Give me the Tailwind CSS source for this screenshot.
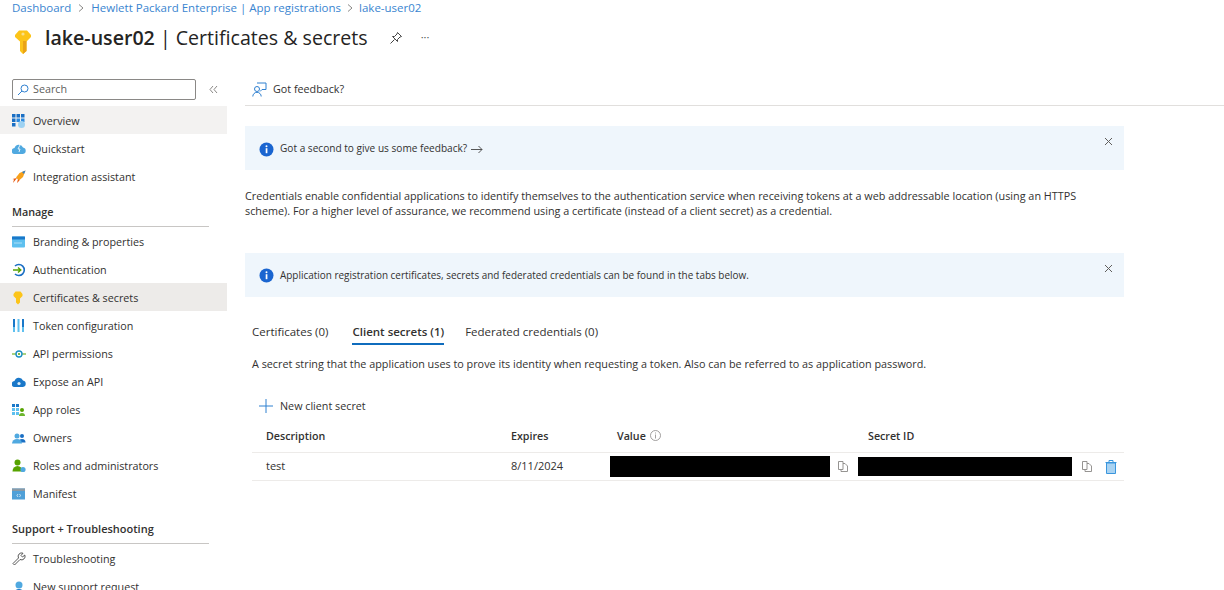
<!DOCTYPE html>
<html lang="en">
<head>
<meta charset="UTF-8" />
<title>lake-user02 | Certificates &amp; secrets</title>
<script src="https://cdn.jsdelivr.net/npm/@tailwindcss/browser@4"></script>
</head>
<body class="bg-white h-[590px] w-[1224px] overflow-hidden font-['Open_Sans','Noto_Sans',sans-serif] text-[11px] text-[#323130]">

<!-- Header -->
<div class="h-[69px] pl-3">
  <div class="flex items-center h-[16px] text-[11.5px] text-[#3a85d0]">
    <span>Dashboard</span>
    <svg class="w-[8px] h-[8px] mx-[6px]" viewBox="0 0 8 8" fill="none" stroke="#8a8886"><path d="M2 0.5 L6 4 L2 7.5"/></svg>
    <span>Hewlett Packard Enterprise | App registrations</span>
    <svg class="w-[8px] h-[8px] mx-[5px]" viewBox="0 0 8 8" fill="none" stroke="#8a8886"><path d="M2 0.5 L6 4 L2 7.5"/></svg>
    <span>lake-user02</span>
  </div>
  <div class="flex items-center mt-[9px] h-[26px]">
    <svg class="w-[18px] h-[26px] mt-[7px] ml-[2px]" viewBox="0 0 18 26"><path d="M5 1.5 H13 L17 6 V8 L12.5 12.5 V22 L9 25 L6 22 V12.5 L1 8 V6 Z" fill="#fcc419"/><path d="M9 12 H12.5 V22 L9 25 Z" fill="#eaa316"/><circle cx="9" cy="5" r="1.6" fill="#f8e08a"/></svg>
    <h1 class="ml-[13px] text-[19.6px] text-[#252423] whitespace-nowrap"><span class="font-semibold">lake-user02</span> | Certificates &amp; secrets</h1>
    <svg class="w-[14px] h-[14px] ml-[21px]" viewBox="0 0 14 14" fill="none" stroke="#444" stroke-width="1"><path d="M8.5 1.5 L12.5 5.5 L11 6 L8.5 8.5 L8.5 10.5 L3.5 5.5 L5.5 5.5 L8 3 Z"/><path d="M5.5 8.5 L1.5 12.5"/></svg>
    <span class="ml-[18px] text-[11px] text-[#555] leading-none -mt-1">···</span>
  </div>
</div>

<div class="flex">
  <!-- Sidebar -->
  <nav class="w-[227px] shrink-0 text-[10.75px]">
    <div class="flex items-start h-[37px] pt-[10px]">
      <div class="ml-3 w-[184px] h-[21px] border border-[#8a8886] rounded-[2px] flex items-center pl-[4px] text-[#605e5c]">
        <svg class="w-[12px] h-[12px] mr-[4px]" viewBox="0 0 12 12" fill="none" stroke="#2f80d0" stroke-width="1"><circle cx="7.5" cy="4.5" r="3.5"/><path d="M5 7 L1 11"/></svg>
        Search
      </div>
      <svg class="w-[9px] h-[9px] ml-[13px] mt-[6px]" viewBox="0 0 9 9" fill="none" stroke="#8a8886"><path d="M4 1 L1 4.5 L4 8 M8 1 L5 4.5 L8 8"/></svg>
    </div>

    <div class="flex items-center h-[28px] pl-3 pt-[2px] bg-[#f3f2f1]">
      <svg class="w-[14px] h-[14px] mr-[7px]" viewBox="0 0 14 14"><rect x="0" y="0" width="3.5" height="3.5" fill="#1a6fc4"/><rect x="4.5" y="0" width="3.5" height="3.5" fill="#1a6fc4"/><rect x="9" y="0" width="3.5" height="3.5" fill="#1a6fc4"/><rect x="0" y="4.5" width="3.5" height="3.5" fill="#1a6fc4"/><rect x="4.5" y="4.5" width="3.5" height="3.5" fill="#2c8ae0"/><rect x="9" y="4.5" width="3.5" height="3.5" fill="#2c8ae0"/><rect x="0" y="9" width="3.5" height="3.5" fill="#1a6fc4"/><circle cx="9.5" cy="10.5" r="3.5" fill="#9ed2f2"/></svg>
      Overview
    </div>
    <div class="flex items-center h-[28px] pl-3 pt-[2px]">
      <svg class="w-[14px] h-[14px] mr-[7px]" viewBox="0 0 14 14"><path d="M3 12 A3 3 0 0 1 2.5 6 A4.5 4.5 0 0 1 11 5.5 A3.3 3.3 0 0 1 11 12 Z" fill="#50a9e0"/><path d="M8 3 L6 7 L8 7 L7 10" fill="none" stroke="#e3f2fb"/></svg>
      Quickstart
    </div>
    <div class="flex items-center h-[28px] pl-3 pt-[2px]">
      <svg class="w-[14px] h-[14px] mr-[7px]" viewBox="0 0 14 14"><path d="M13.5 0.5 L11 7 L7 10.5 L4 7.5 L7.5 3 Z" fill="#f7a11a"/><path d="M13.5 0.5 L10 2 L12 4 Z" fill="#2f80d0"/><path d="M5 8 L1 13 L2 9.5 L0.5 9 Z M6 9 L5 13 L7.5 10.5 Z" fill="#e8590c"/></svg>
      Integration assistant
    </div>

    <div class="mx-3 mt-[14px] w-[197px] h-[23px] border-b border-[#c8c6c4] font-semibold text-[10.8px]"><span class="leading-[15px] block">Manage</span></div>

    <div class="flex items-center h-[28px] pl-3 pt-[2px]">
      <svg class="w-[14px] h-[14px] mr-[7px]" viewBox="0 0 14 14"><rect x="0" y="1.5" width="13" height="11" rx="1" fill="#5ec0ef"/><rect x="0" y="1.5" width="13" height="3" fill="#1a78c9"/><path d="M2.5 8 H10.5" stroke="#fff" stroke-dasharray="1 1"/></svg>
      Branding &amp; properties
    </div>
    <div class="flex items-center h-[28px] pl-3 pt-[2px]">
      <svg class="w-[14px] h-[14px] mr-[7px]" viewBox="0 0 14 14" fill="none"><path d="M3 3 A5.5 5.5 0 1 1 3 11" stroke="#1a6fc4" stroke-width="1.6"/><path d="M1 7 H8.5 M6 4.5 L8.8 7 L6 9.5" stroke="#57a300" stroke-width="1.4"/></svg>
      Authentication
    </div>
    <div class="flex items-center h-[28px] pl-3 pt-[2px] bg-[#edebe9]">
      <svg class="w-[14px] h-[14px] mr-[7px]" viewBox="0 0 14 14"><path d="M3.5 0.5 H8.5 L10.5 3 V5 L8 7.5 V11.5 L6 13.5 L4 11.5 V7.5 L1.5 5 V3 Z" fill="#fcc419"/></svg>
      Certificates &amp; secrets
    </div>
    <div class="flex items-center h-[28px] pl-3 pt-[2px]">
      <svg class="w-[14px] h-[14px] mr-[7px]" viewBox="0 0 14 14"><rect x="1" y="0" width="2" height="13" fill="#1a78c9"/><rect x="5.5" y="0" width="2" height="13" fill="#5ec0ef"/><rect x="10" y="0" width="2" height="13" fill="#1a78c9"/><rect x="1" y="8" width="2" height="5" fill="#5ec0ef"/><rect x="10" y="8" width="2" height="5" fill="#5ec0ef"/></svg>
      Token configuration
    </div>
    <div class="flex items-center h-[28px] pl-3 pt-[2px]">
      <svg class="w-[14px] h-[14px] mr-[7px]" viewBox="0 0 14 14" fill="none"><path d="M0 7 H4 M10 7 H14" stroke="#57a300" stroke-width="1.2"/><circle cx="7" cy="7" r="3" stroke="#1a8fc4" stroke-width="1.4"/><circle cx="7" cy="7" r="1" fill="#57a300"/></svg>
      API permissions
    </div>
    <div class="flex items-center h-[28px] pl-3 pt-[2px]">
      <svg class="w-[14px] h-[14px] mr-[7px]" viewBox="0 0 14 14"><path d="M3 12 A3 3 0 0 1 2.5 6 A4.5 4.5 0 0 1 11 5.5 A3.3 3.3 0 0 1 11 12 Z" fill="#1a78c9"/><circle cx="7" cy="8.5" r="1.6" fill="#dff0fb"/></svg>
      Expose an API
    </div>
    <div class="flex items-center h-[28px] pl-3 pt-[2px]">
      <svg class="w-[14px] h-[14px] mr-[7px]" viewBox="0 0 14 14"><rect x="0" y="1" width="3" height="3" fill="#1a78c9"/><rect x="4" y="1" width="3" height="3" fill="#1a78c9"/><rect x="0" y="5" width="3" height="3" fill="#5ec0ef"/><rect x="4" y="5" width="3" height="3" fill="#5ec0ef"/><rect x="0" y="9" width="3" height="3" fill="#5ec0ef"/><rect x="4" y="9" width="3" height="3" fill="#5ec0ef"/><circle cx="10" cy="7" r="2" fill="#57a300"/><path d="M7 13 A3 3 0 0 1 13 13 Z" fill="#6cb52d"/></svg>
      App roles
    </div>
    <div class="flex items-center h-[28px] pl-3 pt-[2px]">
      <svg class="w-[14px] h-[14px] mr-[7px]" viewBox="0 0 14 14"><circle cx="10" cy="5" r="2" fill="#1a6fc4"/><path d="M6.5 11.5 A3.5 3.5 0 0 1 13.5 11.5 Z" fill="#1a6fc4"/><circle cx="5" cy="5" r="2.5" fill="#50a9e0"/><path d="M0 12.5 A5 4.5 0 0 1 10 12.5 Z" fill="#50a9e0"/></svg>
      Owners
    </div>
    <div class="flex items-center h-[28px] pl-3 pt-[2px]">
      <svg class="w-[14px] h-[14px] mr-[7px]" viewBox="0 0 14 14"><circle cx="5.5" cy="3.5" r="3" fill="#57a300"/><path d="M0.5 12.5 A5 5.5 0 0 1 10.5 12.5 Z" fill="#57a300"/><circle cx="11" cy="10.5" r="2.6" fill="#50a9e0"/></svg>
      Roles and administrators
    </div>
    <div class="flex items-center h-[28px] pl-3 pt-[2px]">
      <svg class="w-[14px] h-[14px] mr-[7px]" viewBox="0 0 14 14"><rect x="0" y="1.5" width="13" height="11" fill="#50a0d8"/><rect x="0" y="1.5" width="13" height="2.5" fill="#8a9aa6"/><path d="M6 7 L5 8.5 L6 10 M7.5 7 L8.5 8.5 L7.5 10" fill="none" stroke="#e3f2fb" stroke-width="0.8"/></svg>
      Manifest
    </div>

    <div class="mx-3 mt-[14px] w-[197px] h-[23px] border-b border-[#c8c6c4] font-semibold text-[11px]"><span class="leading-[15px] block">Support + Troubleshooting</span></div>

    <div class="flex items-center h-[28px] pl-3 pt-[2px]">
      <svg class="w-[14px] h-[14px] mr-[7px]" viewBox="0 0 14 14" fill="none" stroke="#444" stroke-width="0.9"><path d="M1 11.5 L6.5 6 A3.5 3.5 0 0 1 11 1.2 L9 3.5 L10.5 5 L12.8 3 A3.5 3.5 0 0 1 8 7.5 L2.5 13 Z"/></svg>
      Troubleshooting
    </div>
    <div class="flex items-center h-[28px] pl-3 pt-[2px]">
      <svg class="w-[14px] h-[14px] mr-[7px]" viewBox="0 0 14 14"><circle cx="7" cy="5" r="3.5" fill="#50a9e0"/><path d="M1.5 14 A5.5 5 0 0 1 12.5 14 Z" fill="#1a78c9"/></svg>
      New support request
    </div>
  </nav>

  <!-- Main -->
  <main class="flex-1 min-w-0 pl-[18px]">
    <div class="flex items-center h-[37px] border-b border-[#e1dfdd] pl-[7px] pt-[4px] text-[10.75px]">
      <svg class="w-[15px] h-[15px] mr-[6px]" viewBox="0 0 15 15" fill="none" stroke="#2f80d0" stroke-width="1"><path d="M5 1 H14 V7.5 H10 L8 9.5"/><circle cx="5" cy="7" r="2.5"/><path d="M0.8 14.5 A4.2 4.2 0 0 1 9.2 14.5"/></svg>
      Got feedback?
    </div>

    <div class="w-[879px] h-[44px] mt-[20px] pt-[2px] bg-[#eff6fc] flex items-center pl-[14px] relative text-[10.1px]">
      <svg class="w-[15px] h-[15px] mr-[6px]" viewBox="0 0 15 15"><circle cx="7.5" cy="7.5" r="7" fill="#1a65d0"/><rect x="6.7" y="6.2" width="1.7" height="5" fill="#fff"/><circle cx="7.5" cy="4.2" r="1" fill="#fff"/></svg>
      Got a second to give us some feedback?
      <svg class="w-[12px] h-[9px] ml-[4px]" viewBox="0 0 12 9" fill="none" stroke="#444" stroke-width="0.9"><path d="M0 4.5 H11 M7.5 1 L11 4.5 L7.5 8"/></svg>
      <svg class="absolute right-[11px] top-[11px] w-[9px] h-[9px]" viewBox="0 0 9 9" stroke="#605e5c"><path d="M1 1 L8 8 M8 1 L1 8"/></svg>
    </div>

    <p class="w-[870px] mt-[18px] leading-[15px] text-[10.82px]">Credentials enable confidential applications to identify themselves to the authentication service when receiving tokens at a web addressable location (using an HTTPS scheme). For a higher level of assurance, we recommend using a certificate (instead of a client secret) as a credential.</p>

    <div class="w-[879px] h-[44px] mt-[35px] bg-[#eff6fc] flex items-center pl-[14px] relative text-[9.95px]">
      <svg class="w-[15px] h-[15px] mr-[6px]" viewBox="0 0 15 15"><circle cx="7.5" cy="7.5" r="7" fill="#1a65d0"/><rect x="6.7" y="6.2" width="1.7" height="5" fill="#fff"/><circle cx="7.5" cy="4.2" r="1" fill="#fff"/></svg>
      Application registration certificates, secrets and federated credentials can be found in the tabs below.
      <svg class="absolute right-[11px] top-[11px] w-[9px] h-[9px]" viewBox="0 0 9 9" stroke="#605e5c"><path d="M1 1 L8 8 M8 1 L1 8"/></svg>
    </div>

    <div class="ml-[7px] mt-[26px] flex text-[11.5px]">
      <span class="h-[22px]">Certificates (0)</span>
      <span class="h-[22px] ml-[24px] font-semibold border-b-2 border-[#0f6cbd]">Client secrets (1)</span>
      <span class="h-[22px] ml-[21px]">Federated credentials (0)</span>
    </div>

    <p class="ml-[7px] mt-[11px] leading-[15px] text-[10.82px]">A secret string that the application uses to prove its identity when requesting a token. Also can be referred to as application password.</p>

    <div class="flex items-center ml-[14px] mt-[27px] h-[16px] text-[10.75px]">
      <svg class="w-[14px] h-[14px] mr-[7px]" viewBox="0 0 14 14" stroke="#2f80d0"><path d="M7 0 V14 M0 7 H14"/></svg>
      New client secret
    </div>

    <div class="ml-[7px] w-[872px] mt-[10px]">
      <div class="grid grid-cols-[259px_99px_248px_1fr] h-[29px] pb-[4px] items-center border-b border-[#edebe9] font-semibold text-[10.7px]">
        <span class="pl-[14px]">Description</span>
        <span>Expires</span>
        <span class="pl-[7px] flex items-center">Value
          <svg class="w-[11px] h-[11px] ml-[4px]" viewBox="0 0 11 11" fill="none" stroke="#8a8886" stroke-width="0.8"><circle cx="5.5" cy="5.5" r="5"/><path d="M5.5 4.5 V8.5 M5.5 2.5 V3.5"/></svg>
        </span>
        <span class="pl-[10px]">Secret ID</span>
      </div>
      <div class="grid grid-cols-[259px_99px_248px_1fr] h-[28px] items-center border-b border-[#edebe9]">
        <span class="pl-[14px]">test</span>
        <span>8/11/2024</span>
        <span class="flex items-center">
          <span class="block w-[220px] h-[21px] bg-black"></span>
          <svg class="w-[10px] h-[11px] ml-[8px]" viewBox="0 0 10 11" fill="none" stroke="#8a8886" stroke-width="0.9"><path d="M0.5 0.5 H5 V8.5 H0.5 Z M5 2.5 H7 L9.5 5 V10.5 H3 V8.5"/></svg>
        </span>
        <span class="flex items-center">
          <span class="block w-[214px] h-[19px] bg-black"></span>
          <svg class="w-[10px] h-[11px] ml-[10px]" viewBox="0 0 10 11" fill="none" stroke="#8a8886" stroke-width="0.9"><path d="M0.5 0.5 H5 V8.5 H0.5 Z M5 2.5 H7 L9.5 5 V10.5 H3 V8.5"/></svg>
          <svg class="w-[12px] h-[14px] ml-[13px]" viewBox="0 0 12 14"><path d="M1.5 3 H10.5 V13.5 H1.5 Z" fill="#a9d3f2" stroke="#3a96dd"/><path d="M0.5 2.5 H11.5 M4 2 V0.5 H8 V2" fill="none" stroke="#3a96dd"/></svg>
        </span>
      </div>
    </div>
  </main>
</div>
</body>
</html>
